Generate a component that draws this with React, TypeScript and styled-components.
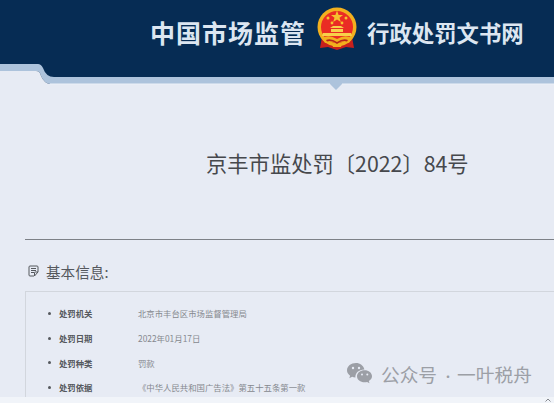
import React from "react";
import styled, { createGlobalStyle } from "styled-components";

const GlobalStyle = createGlobalStyle`
  html, body {
    margin: 0;
    padding: 0;
    height: 403px;
    overflow: hidden;
    background: #e7ebf4;
    font-family: "Noto Sans CJK SC", "Noto Sans", sans-serif;
  }
`;

const Page = styled.div`
  position: relative;
  width: 554px;
  height: 403px;
  overflow: hidden;
  display: flex;
  flex-direction: column;
`;

const Viewport = styled.div`
  height: 397px;
  overflow: hidden;
  flex-shrink: 0;
`;

const Header = styled.header`
  position: relative;
  height: 90px;
`;

const HeaderShape = styled.svg`
  position: absolute;
  inset: 0;
`;

const Brand = styled.div`
  position: relative;
  height: 64px;
  padding: 7px 0 0 150px;
  box-sizing: border-box;
  display: flex;
  align-items: flex-start;
  color: #dce6f1;
  font-weight: 700;
`;

const BrandText = styled.span<{ $size: number; $spacing: number; $width: number; $gap: number }>`
  width: ${(p) => p.$width}px;
  margin-right: ${(p) => p.$gap}px;
  height: 42px;
  line-height: 51px;
  font-size: ${(p) => p.$size}px;
  letter-spacing: ${(p) => p.$spacing}px;
  white-space: nowrap;
`;

const Title = styled.h1`
  margin: 56px 0 0;
  padding-left: 206px;
  height: 34px;
  line-height: 34px;
  font-size: 21.3px;
  font-weight: 400;
  color: #46484c;
  white-space: nowrap;
`;

const Rule = styled.hr`
  margin: 59px 0 0 25px;
  height: 1px;
  border: 0;
  background: #7d8187;
`;

const SectionHeading = styled.div`
  display: flex;
  align-items: center;
  gap: 7px;
  margin: 20px 0 0 28px;
  height: 22px;
  font-size: 14.6px;
  color: #55585d;
`;

const InfoBox = styled.section`
  margin: 9px 0 0 25px;
  border-top: 1px solid #d2d6dd;
  border-left: 1px solid #d2d6dd;
  padding: 9px 0 0 22px;
  height: 120px;
`;

const InfoList = styled.ul`
  margin: 0;
  padding: 0;
  list-style: none;
`;

const InfoRow = styled.li`
  display: flex;
  align-items: center;
  height: 24.7px;
  font-size: 8.4px;
  white-space: nowrap;
`;

const Bullet = styled.i`
  width: 3px;
  height: 3px;
  border-radius: 50%;
  background: #55585d;
  margin-right: 8px;
`;

const Label = styled.span`
  width: 79px;
  font-weight: 700;
  color: #55585d;
`;

const Value = styled.span`
  color: #85888e;
`;

const FooterStrip = styled.div`
  flex: 1;
  background: #f1f4f9;
  display: flex;
  justify-content: flex-end;
  align-items: center;
  padding-right: 3px;
`;

const Watermark = styled.div`
  position: absolute;
  left: 347px;
  top: 361px;
  display: flex;
  align-items: center;
  gap: 9px;
  height: 24px;
  font-size: 18.7px;
  color: #9c9fa6;
  white-space: nowrap;
`;

const WatermarkDot = styled.span`
  margin: 0 3px 0 5px;
  font-size: 12px;
`;

const Emblem = () => (
  <svg width="42" height="43" viewBox="0 0 42 43" style={{ flexShrink: 0, margin: "0 9px 0 0" }}>
    <path d="M6 30 L4 41 L12 40 L21 43 L30 40 L38 41 L36 30 Z" fill="#c8201c" />
    <circle cx="21" cy="20" r="19.5" fill="#f2b01e" />
    <circle cx="21" cy="20" r="16" fill="#ea2c24" />
    <path d="M21 3.5 L22.6 8 L27 8 L23.5 10.7 L24.8 15 L21 12.4 L17.2 15 L18.5 10.7 L15 8 L19.4 8 Z" fill="#f6c22e" />
    <circle cx="12" cy="11" r="1.5" fill="#f6c22e" />
    <circle cx="30" cy="11" r="1.5" fill="#f6c22e" />
    <circle cx="16" cy="16" r="1.4" fill="#f6c22e" />
    <circle cx="26" cy="16" r="1.4" fill="#f6c22e" />
    <path d="M14 21 L17 19 L25 19 L28 21 Z M15 22 H27 V25 H15 Z M7 26 H35 L36 29 H6 Z" fill="#f8d04a" />
    <path d="M6 31 Q13 27 21 32 Q29 27 36 31 L33 36 Q27 33 21 37 Q15 33 9 36 Z" fill="#f2b01e" />
    <path d="M10 33 Q15 31 21 35 Q27 31 32 33 L31 34.5 Q26 33 21 37 Q16 33 11 34.5 Z" fill="#b8231a" />
    <path d="M16 37 H26 L25 40 H17 Z" fill="#f2b01e" />
  </svg>
);

const NoteIcon = () => (
  <svg width="11" height="12" viewBox="0 0 11 12" fill="none" stroke="#55585d" strokeWidth="1" style={{ flexShrink: 0 }}>
    <path d="M6 11 H2 Q1 11 1 10 V2 Q1 1 2 1 H9 Q10 1 10 2 V7 L6.5 11" />
    <path d="M3 3.5 H8 M3 5.5 H8 M3 7.5 H6" />
    <path d="M10 7 H7 Q6.5 7 6.5 7.5 V11" />
  </svg>
);

const WeChatIcon = () => (
  <svg width="25" height="21" viewBox="0 0 25 21" style={{ flexShrink: 0 }}>
    <path d="M9 0 C4 0 0 3.2 0 7.3 C0 9.6 1.2 11.4 3.1 12.8 L2.3 15.3 L5.2 13.8 C6.2 14.1 7.1 14.3 8.4 14.4 C8 10 12 6.3 17.4 6.4 C16.5 2.7 13 0 9 0 Z" fill="#9c9fa6" />
    <path d="M25 13.2 C25 9.8 21.6 7.2 17.6 7.2 C13.4 7.2 10 9.8 10 13.2 C10 16.6 13.4 19.3 17.6 19.3 C18.5 19.3 19.3 19.1 20.1 18.9 L22.5 20.2 L21.8 18 C23.7 16.8 25 15.1 25 13.2 Z" fill="#9c9fa6" />
    <circle cx="6" cy="5" r="1.2" fill="#e7ebf4" />
    <circle cx="12" cy="5" r="1.2" fill="#e7ebf4" />
    <circle cx="15" cy="11.5" r="1" fill="#e7ebf4" />
    <circle cx="20.3" cy="11.5" r="1" fill="#e7ebf4" />
  </svg>
);

const ScrollCaret = () => (
  <svg width="6" height="4" viewBox="0 0 6 4" fill="none" stroke="#85888e" strokeWidth="1">
    <path d="M0.5 3.5 L3 1 L5.5 3.5" />
  </svg>
);

const rows = [
  { label: "处罚机关", value: "北京市丰台区市场监督管理局" },
  { label: "处罚日期", value: "2022年01月17日" },
  { label: "处罚种类", value: "罚款" },
  { label: "处罚依据", value: "《中华人民共和国广告法》第五十五条第一款" },
];

export default function App() {
  return (
    <>
      <GlobalStyle />
      <Page>
        <Viewport>
          <Header>
            <HeaderShape width="554" height="90" viewBox="0 0 554 90">
              <rect width="554" height="84" fill="#062c54" />
              <path d="M0 64 H38 Q41 64 43 68 Q46 77 54 77 H554 V84 H342 L336 90 L330 84 H50 Q44 83 41 76 Q40 71 36 71 H0 Z" fill="#adc3dc" />
              <path d="M0 71 H36 Q40 71 41 76 Q44 83 50 84 H0 Z" fill="#e7ebf4" />
              <rect y="83.5" x="50" width="280" height="1" fill="#eef1f7" />
              <rect y="83.5" x="342" width="212" height="1" fill="#eef1f7" />
            </HeaderShape>
            <Brand>
              <BrandText $size={25} $spacing={1} $width={157} $gap={9}>中国市场监管</BrandText>
              <Emblem />
              <BrandText $size={22.4} $spacing={0} $width={156} $gap={0}>行政处罚文书网</BrandText>
            </Brand>
          </Header>
          <Title>京丰市监处罚〔2022〕84号</Title>
          <Rule />
          <SectionHeading>
            <NoteIcon />
            基本信息:
          </SectionHeading>
          <InfoBox>
            <InfoList>
              {rows.map((row) => (
                <InfoRow key={row.label}>
                  <Bullet />
                  <Label>{row.label}</Label>
                  <Value>{row.value}</Value>
                </InfoRow>
              ))}
            </InfoList>
          </InfoBox>
        </Viewport>
        <FooterStrip>
          <ScrollCaret />
        </FooterStrip>
        <Watermark>
          <WeChatIcon />
          <span>
            公众号<WatermarkDot>·</WatermarkDot>一叶税舟
          </span>
        </Watermark>
      </Page>
    </>
  );
}
